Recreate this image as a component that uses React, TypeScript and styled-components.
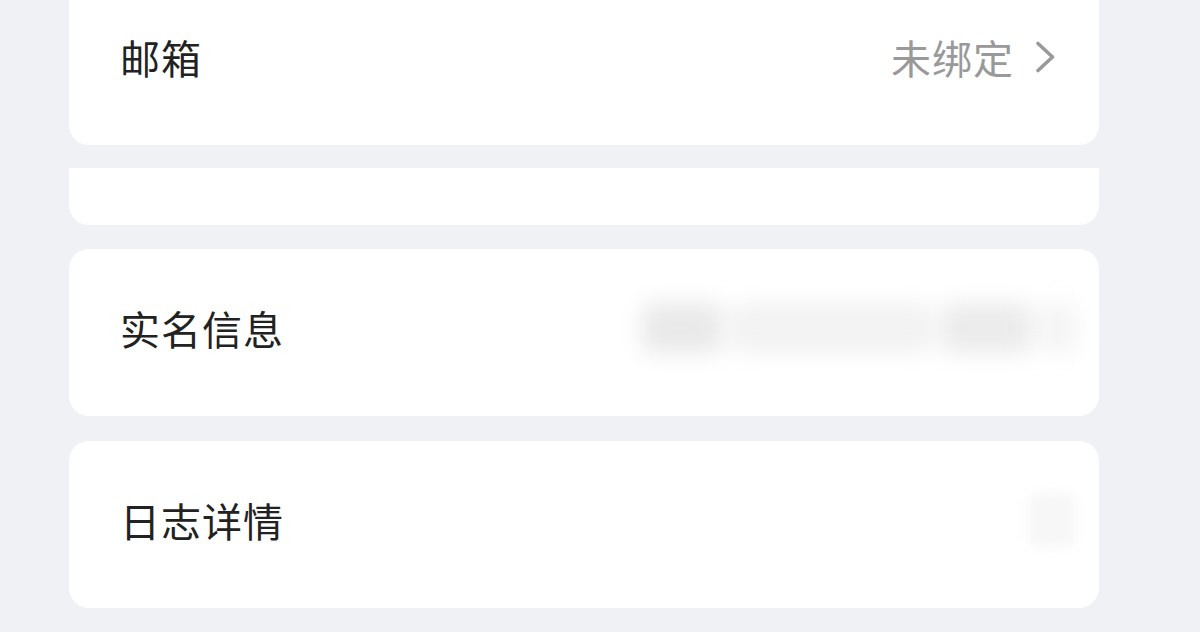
import React from 'react';
import styled, { createGlobalStyle } from 'styled-components';

const GlobalStyle = createGlobalStyle`
    html, body {
        margin: 0;
        padding: 0;
        background: #f0f1f5;
        font-family: "Noto Sans CJK SC", "Noto Sans", sans-serif;
        overflow: hidden;
    }
`;

const Page = styled.div`
    width: 1200px;
    height: 632px;
    overflow: hidden;
    padding-left: 69px;
    box-sizing: border-box;
`;

const List = styled.div`
    width: 1030px;
    margin-top: -22px;
    display: flex;
    flex-direction: column;
`;

const Card = styled.div<{ flatTop?: boolean; gapBefore?: number }>`
    background: #ffffff;
    border-radius: ${props => props.flatTop ? "0 0 20px 20px" : "20px"};
    height: ${props => props.flatTop ? "57px" : "167px"};
    margin-top: ${props => props.gapBefore || 0}px;
    padding: 0 43px 10px 51px;
    box-sizing: border-box;
    display: flex;
    align-items: center;
    justify-content: space-between;
`;

const Label = styled.span`
    font-size: 40px;
    color: #222222;
    letter-spacing: 1px;
`;

const Value = styled.div`
    display: flex;
    align-items: center;
    gap: 20px;
    font-size: 40px;
    color: #999999;
    letter-spacing: 1px;
`;

const Blurred = styled.div`
    display: flex;
    align-items: center;
    gap: 10px;
    filter: blur(11px);
    margin-right: -20px;
`;

const BlurBlock = styled.div<{ w: number; shade: string }>`
    width: ${props => props.w}px;
    height: 50px;
    background: ${props => props.shade};
    border-radius: 8px;
`;

const BlurSquare = styled.div`
    width: 48px;
    height: 54px;
    background: #f7f7f7;
    border-radius: 10px;
    filter: blur(6px);
    margin-right: -20px;
`;

const Chevron = () => (
    <svg width="22" height="32" viewBox="0 0 22 32" fill="none">
        <path d="M4 2.5 L18.5 16 L4 29.5" stroke="#999999" strokeWidth="3.6" strokeLinecap="round" strokeLinejoin="round" />
    </svg>
);

export default function App() {
    return (
        <Page>
            <GlobalStyle />
            <List>
                <Card>
                    <Label>邮箱</Label>
                    <Value>
                        未绑定
                        <Chevron />
                    </Value>
                </Card>
                <Card flatTop gapBefore={23} />
                <Card gapBefore={24}>
                    <Label>实名信息</Label>
                    <Blurred>
                        <BlurBlock w={80} shade="#e9e9e9" />
                        <BlurBlock w={200} shade="#f2f2f2" />
                        <BlurBlock w={90} shade="#ebebeb" />
                        <BlurBlock w={34} shade="#f4f4f4" />
                    </Blurred>
                </Card>
                <Card gapBefore={25}>
                    <Label>日志详情</Label>
                    <BlurSquare />
                </Card>
            </List>
        </Page>
    );
}
